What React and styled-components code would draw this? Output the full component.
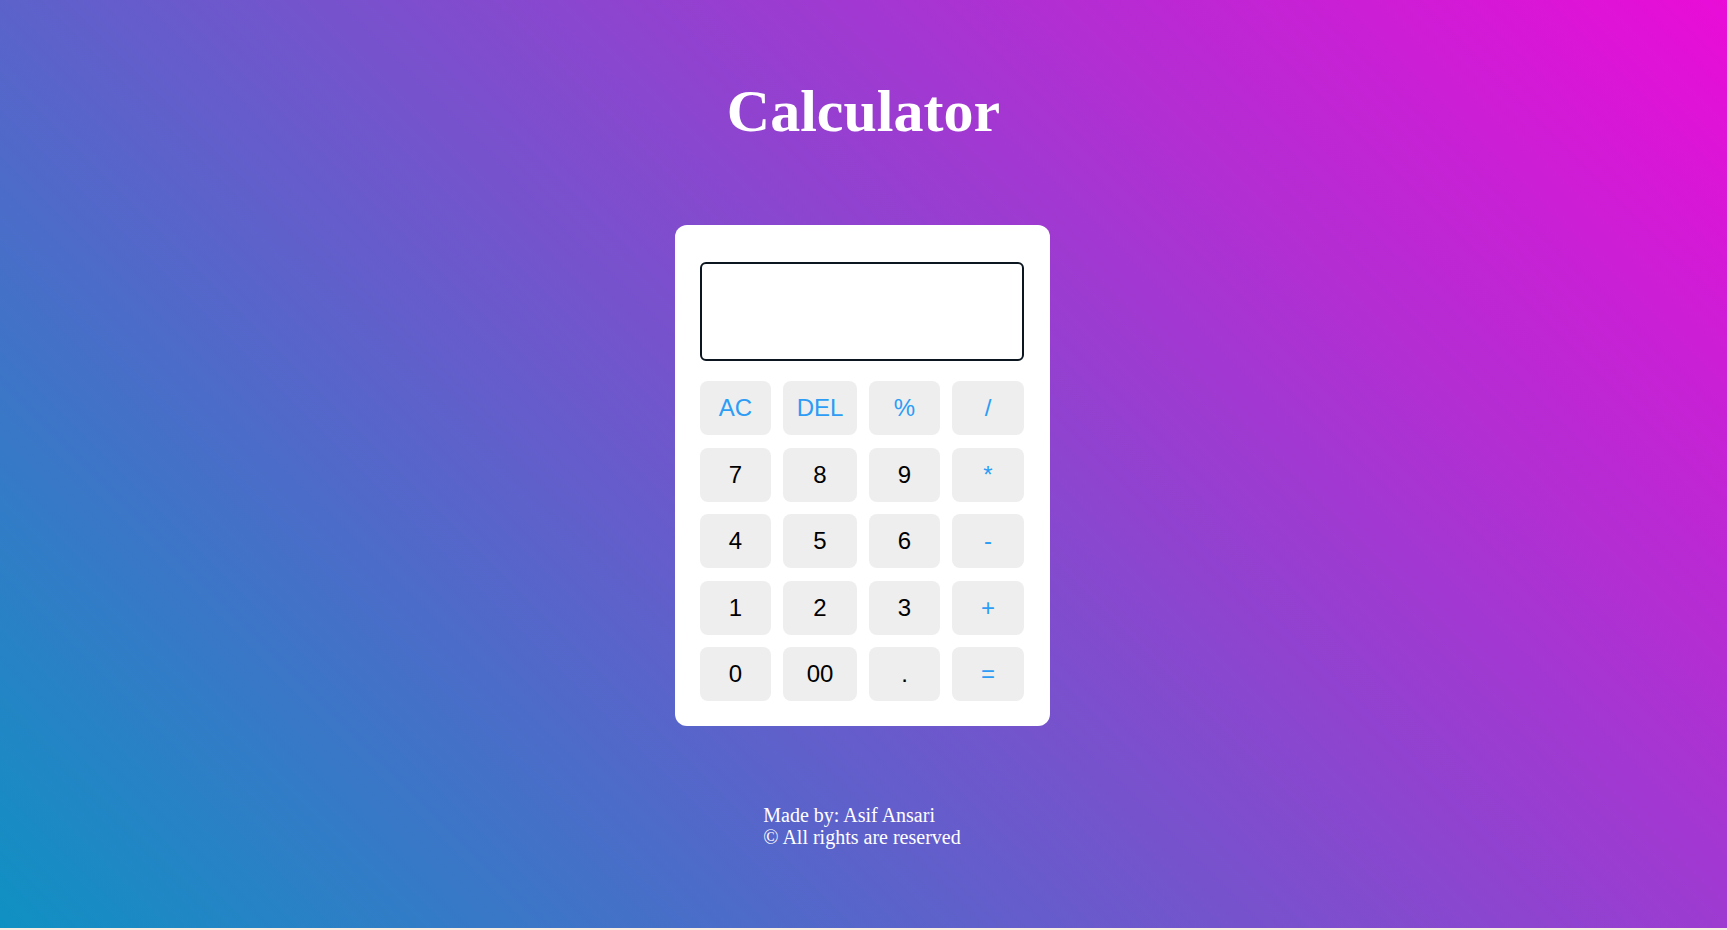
import React, { useState } from "react";
import styled, { createGlobalStyle } from "styled-components";

const GlobalStyle = createGlobalStyle`
  body {
    margin: 0;
    background: #f8ece2;
  }
`;

const keys = [
  ["AC", "op"], ["DEL", "op"], ["%", "op"], ["/", "op"],
  ["7"], ["8"], ["9"], ["*", "op"],
  ["4"], ["5"], ["6"], ["-", "op"],
  ["1"], ["2"], ["3"], ["+", "op"],
  ["0"], ["00"], ["."], ["=", "op"],
];

const App = () => {
  const [value, setValue] = useState("");

  const press = (k) => {
    if (k === "AC") return setValue("");
    if (k === "DEL") return setValue((v) => v.slice(0, -1));
    if (k === "=") {
      try {
        // eslint-disable-next-line no-new-func
        setValue(String(Function(`return (${value})`)()));
      } catch (e) {
        setValue("Error");
      }
      return;
    }
    setValue((v) => v + k);
  };

  return (
    <Page>
      <GlobalStyle />
      <Title>Calculator</Title>
      <Card>
        <Display type="text" value={value} readOnly />
        <Keypad>
          {keys.map(([label, kind]) => (
            <Key key={label} $op={kind === "op"} onClick={() => press(label)}>
              {label}
            </Key>
          ))}
        </Keypad>
      </Card>
      <Footer>
        Made by: Asif Ansari
        <br />
        © All rights are reserved
      </Footer>
    </Page>
  );
};

export default App;

const Page = styled.div`
  min-height: 928px;
  display: flex;
  flex-direction: column;
  align-items: center;
  background: linear-gradient(45deg, #0f91c3 0%, #ea0cd8 100%);
  font-family: "Liberation Serif", serif;
  color: #fff;
`;

const Title = styled.h1`
  margin: 81px 0 0;
  font-size: 60px;
  line-height: 60px;
  font-weight: bold;
`;

const Card = styled.div`
  box-sizing: border-box;
  width: 375px;
  margin: 84px 2px 0 0;
  padding: 37px 26px 25px 25px;
  background: #fff;
  border-radius: 12px;
`;

const Display = styled.input`
  display: block;
  box-sizing: border-box;
  width: 100%;
  height: 99px;
  margin: 0 0 20px;
  padding: 0 14px;
  border: 2px solid #0b1621;
  border-radius: 6px;
  outline: none;
  text-align: right;
  font-family: "Liberation Sans", Arial, sans-serif;
  font-size: 32px;
  color: #111;
`;

const Keypad = styled.div`
  display: grid;
  grid-template-columns: 71px 74px 71px 72px;
  grid-auto-rows: 54px;
  column-gap: 12px;
  row-gap: 12.5px;
`;

const Key = styled.button`
  border: none;
  border-radius: 8px;
  background: #eeeeee;
  padding: 0;
  font-family: "Liberation Sans", Arial, sans-serif;
  font-size: 24px;
  color: ${(p) => (p.$op ? "#2d9cf5" : "#000")};
  cursor: pointer;
  &:hover {
    background: #e2e2e2;
  }
`;

const Footer = styled.div`
  margin: 78px 3px 0 0;
  font-size: 20px;
  line-height: 22px;
  text-align: left;
`;
